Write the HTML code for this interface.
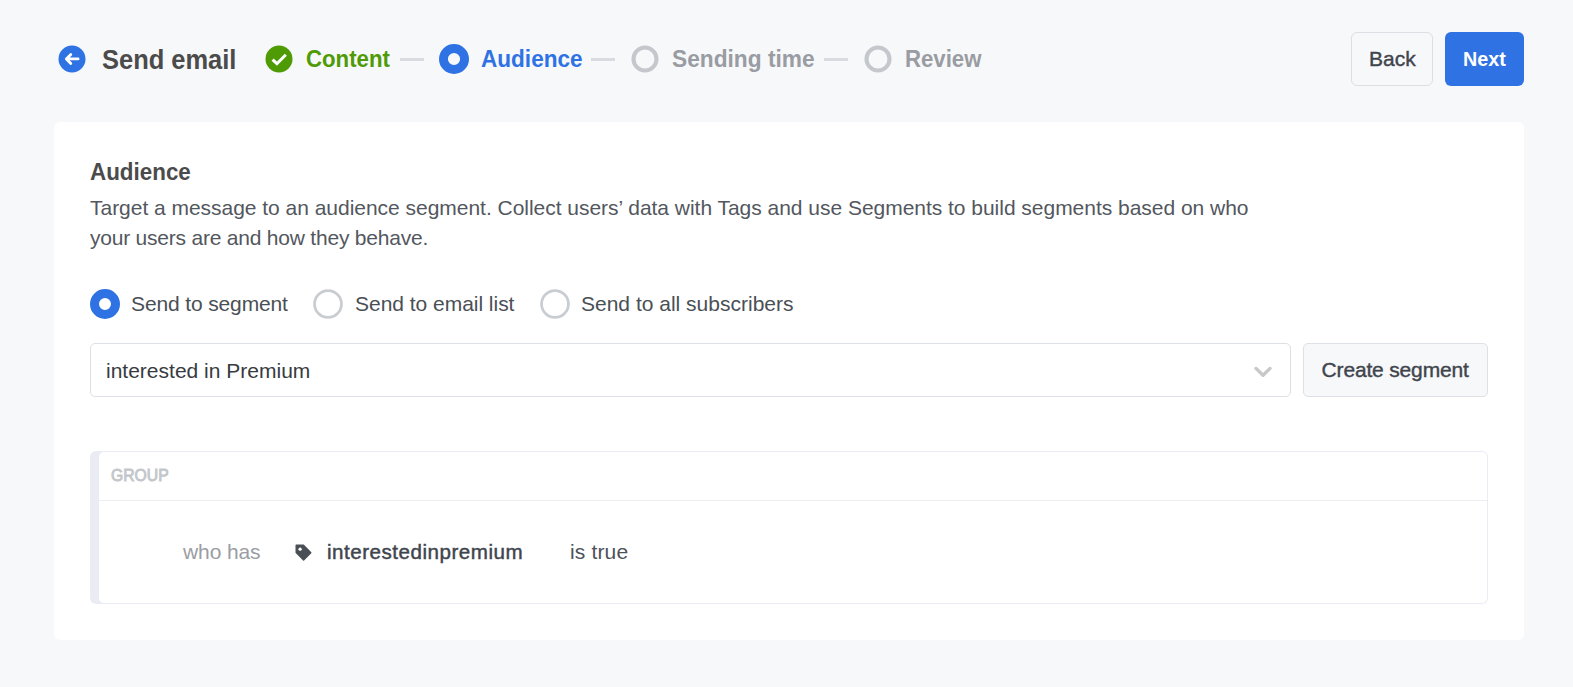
<!DOCTYPE html>
<html><head><meta charset="utf-8">
<style>
html,body{margin:0;padding:0;}
body{width:1573px;height:687px;background:#f7f8fa;position:relative;overflow:hidden;font-family:"Liberation Sans",sans-serif;}
.t{position:absolute;white-space:nowrap;}
.b{font-weight:bold;}
.card{position:absolute;left:54px;top:122px;width:1470px;height:518px;background:#fff;border-radius:6px;}
.btn{position:absolute;box-sizing:border-box;border-radius:6px;}
</style></head>
<body>
<!-- header -->
<svg class="t" style="left:58px;top:45px" width="28" height="28" viewBox="0 0 28 28">
  <circle cx="14" cy="14" r="13.5" fill="#2f72e4"/>
  <path d="M8.4 13.9 H20.1 M12.8 9.4 L8.4 13.9 L12.8 18.4" stroke="#fff" stroke-width="2.8" fill="none" stroke-linecap="round" stroke-linejoin="round"/>
</svg>
<div class="t b" id="h1" style="left:102px;top:46.5px;font-size:27px;line-height:27px;color:#4b4b4b;transform:scaleX(0.943);transform-origin:0 0">Send email</div>

<svg class="t" style="left:265px;top:45px" width="28" height="28" viewBox="0 0 28 28">
  <circle cx="14" cy="14" r="13.5" fill="#4f9b06"/>
  <path d="M7.6 14.6 L11.9 18.7 L20.8 9.8" stroke="#fff" stroke-width="3" fill="none" stroke-linecap="butt" stroke-linejoin="miter"/>
</svg>
<div class="t b" id="s1" style="left:306px;top:47px;font-size:24.5px;line-height:24.5px;color:#4f9b06;transform:scaleX(0.906);transform-origin:0 0">Content</div>
<div class="t" style="left:400px;top:58px;width:24px;height:3px;background:#d8dbe0"></div>

<svg class="t" style="left:439px;top:44px" width="30" height="30" viewBox="0 0 30 30">
  <circle cx="15" cy="15" r="10.55" fill="none" stroke="#2f72e4" stroke-width="8.9"/>
</svg>
<div class="t b" id="s2" style="left:481px;top:47px;font-size:24.5px;line-height:24.5px;color:#2f72e4;transform:scaleX(0.921);transform-origin:0 0">Audience</div>
<div class="t" style="left:591px;top:58px;width:24px;height:3px;background:#d8dbe0"></div>

<svg class="t" style="left:631px;top:45px" width="28" height="28" viewBox="0 0 28 28">
  <circle cx="14" cy="14" r="11.5" fill="none" stroke="#c4c7cc" stroke-width="4.1"/>
</svg>
<div class="t b" id="s3" style="left:672px;top:47px;font-size:24.5px;line-height:24.5px;color:#999ca2;transform:scaleX(0.927);transform-origin:0 0">Sending time</div>
<div class="t" style="left:824px;top:58px;width:24px;height:3px;background:#d8dbe0"></div>

<svg class="t" style="left:864px;top:45px" width="28" height="28" viewBox="0 0 28 28">
  <circle cx="14" cy="14" r="11.5" fill="none" stroke="#c4c7cc" stroke-width="4.1"/>
</svg>
<div class="t b" id="s4" style="left:905px;top:47px;font-size:24.5px;line-height:24.5px;color:#999ca2;transform:scaleX(0.905);transform-origin:0 0">Review</div>

<div class="btn" style="left:1351px;top:32px;width:82px;height:54px;border:1px solid #dcdfe4;background:#f7f8fa"></div>
<div class="t" id="bk" style="left:1369px;top:48px;font-size:21px;line-height:21px;color:#3f444c;-webkit-text-stroke:0.4px #3f444c">Back</div>
<div class="btn" style="left:1445px;top:32px;width:79px;height:54px;background:#2f72e4"></div>
<div class="t b" id="nx" style="left:1463px;top:48px;font-size:21px;line-height:21px;color:#fff;transform:scaleX(0.94);transform-origin:0 0">Next</div>

<!-- card -->
<div class="card"></div>
<div class="t b" id="ttl" style="left:89.5px;top:159.5px;font-size:24.5px;line-height:24.5px;color:#4b4b4b;transform:scaleX(0.914);transform-origin:0 0">Audience</div>
<div class="t" id="d1" style="left:90px;top:197.00px;font-size:21px;line-height:21px;color:#53575e;letter-spacing:-0.026px">Target a message to an audience segment. Collect users’ data with Tags and use Segments to build segments based on who</div>
<div class="t" id="d2" style="left:90px;top:227.00px;font-size:21px;line-height:21px;color:#53575e;letter-spacing:-0.214px">your users are and how they behave.</div>

<svg class="t" style="left:90px;top:289px" width="30" height="30" viewBox="0 0 30 30">
  <circle cx="15" cy="15" r="10.5" fill="none" stroke="#2f72e4" stroke-width="9"/>
</svg>
<div class="t" id="r1" style="top:293.00px;left:131px;font-size:21px;line-height:21px;color:#4a4f56;letter-spacing:-0.131px">Send to segment</div>
<svg class="t" style="left:313px;top:289px" width="30" height="30" viewBox="0 0 30 30">
  <circle cx="15" cy="15" r="13.45" fill="none" stroke="#c9ccd0" stroke-width="2.7"/>
</svg>
<div class="t" id="r2" style="top:293.00px;left:355px;font-size:21px;line-height:21px;color:#4a4f56;letter-spacing:-0.027px">Send to email list</div>
<svg class="t" style="left:540px;top:289px" width="30" height="30" viewBox="0 0 30 30">
  <circle cx="15" cy="15" r="13.45" fill="none" stroke="#c9ccd0" stroke-width="2.7"/>
</svg>
<div class="t" id="r3" style="top:293.00px;left:581px;font-size:21px;line-height:21px;color:#4a4f56;letter-spacing:0.002px">Send to all subscribers</div>

<div class="btn" style="left:90px;top:343px;width:1201px;height:54px;border:1px solid #dde0e4;background:#fff;border-radius:5px"></div>
<div class="t" id="dd" style="left:106px;top:360.00px;font-size:21px;line-height:21px;color:#373b41;letter-spacing:0.004px">interested in Premium</div>
<svg class="t" style="left:1253px;top:365px" width="20" height="14" viewBox="0 0 20 14">
  <path d="M3 3.4 L10 10.3 L17 3.4" stroke="#c8c8c8" stroke-width="3.3" fill="none" stroke-linecap="round" stroke-linejoin="round"/>
</svg>
<div class="btn" style="left:1303px;top:343px;width:185px;height:54px;border:1px solid #dde0e4;background:#f7f8fa;border-radius:5px"></div>
<div class="t" id="cs" style="left:1321.6px;top:359.00px;font-size:21px;line-height:21px;color:#40454d;-webkit-text-stroke:0.4px #40454d;letter-spacing:-0.169px">Create segment</div>

<div class="t" style="left:90px;top:451px;width:1398px;height:153px;background:#e9edf3;border-radius:6px"></div>
<div class="t" style="left:99px;top:452px;width:1388px;height:151px;background:#fff;border-radius:5px"></div>
<div class="t" style="left:99px;top:500px;width:1388px;height:1px;background:#eceef2"></div>
<div class="t" id="grp" style="left:110.8px;top:466.5px;font-size:17px;line-height:17px;color:#c3c6cb;-webkit-text-stroke:0.9px #c3c6cb;transform:scaleX(0.925);transform-origin:0 0">GROUP</div>
<div class="t" id="wh" style="left:183px;top:540.60px;font-size:21px;line-height:21px;color:#9a9da3;letter-spacing:-0.099px">who has</div>
<svg class="t" style="left:294px;top:543px" width="19" height="19" viewBox="0 0 19 19">
  <path d="M2.2 2.3 L9.5 2.3 L16.8 9.7 L9.6 16.9 L2.2 9.5 Z" fill="#4a4e55" stroke="#4a4e55" stroke-width="1.4" stroke-linejoin="round"/>
  <circle cx="6.1" cy="6.2" r="1.65" fill="#fff"/>
</svg>
<div class="t" id="tg" style="left:327px;top:542.3px;font-size:20.6px;line-height:20.6px;color:#40454d;-webkit-text-stroke:0.45px #40454d;letter-spacing:0.5px">interestedinpremium</div>
<div class="t" id="it" style="left:570px;top:540.60px;font-size:21px;line-height:21px;color:#4d5259;letter-spacing:0.156px">is true</div>
</body></html>
